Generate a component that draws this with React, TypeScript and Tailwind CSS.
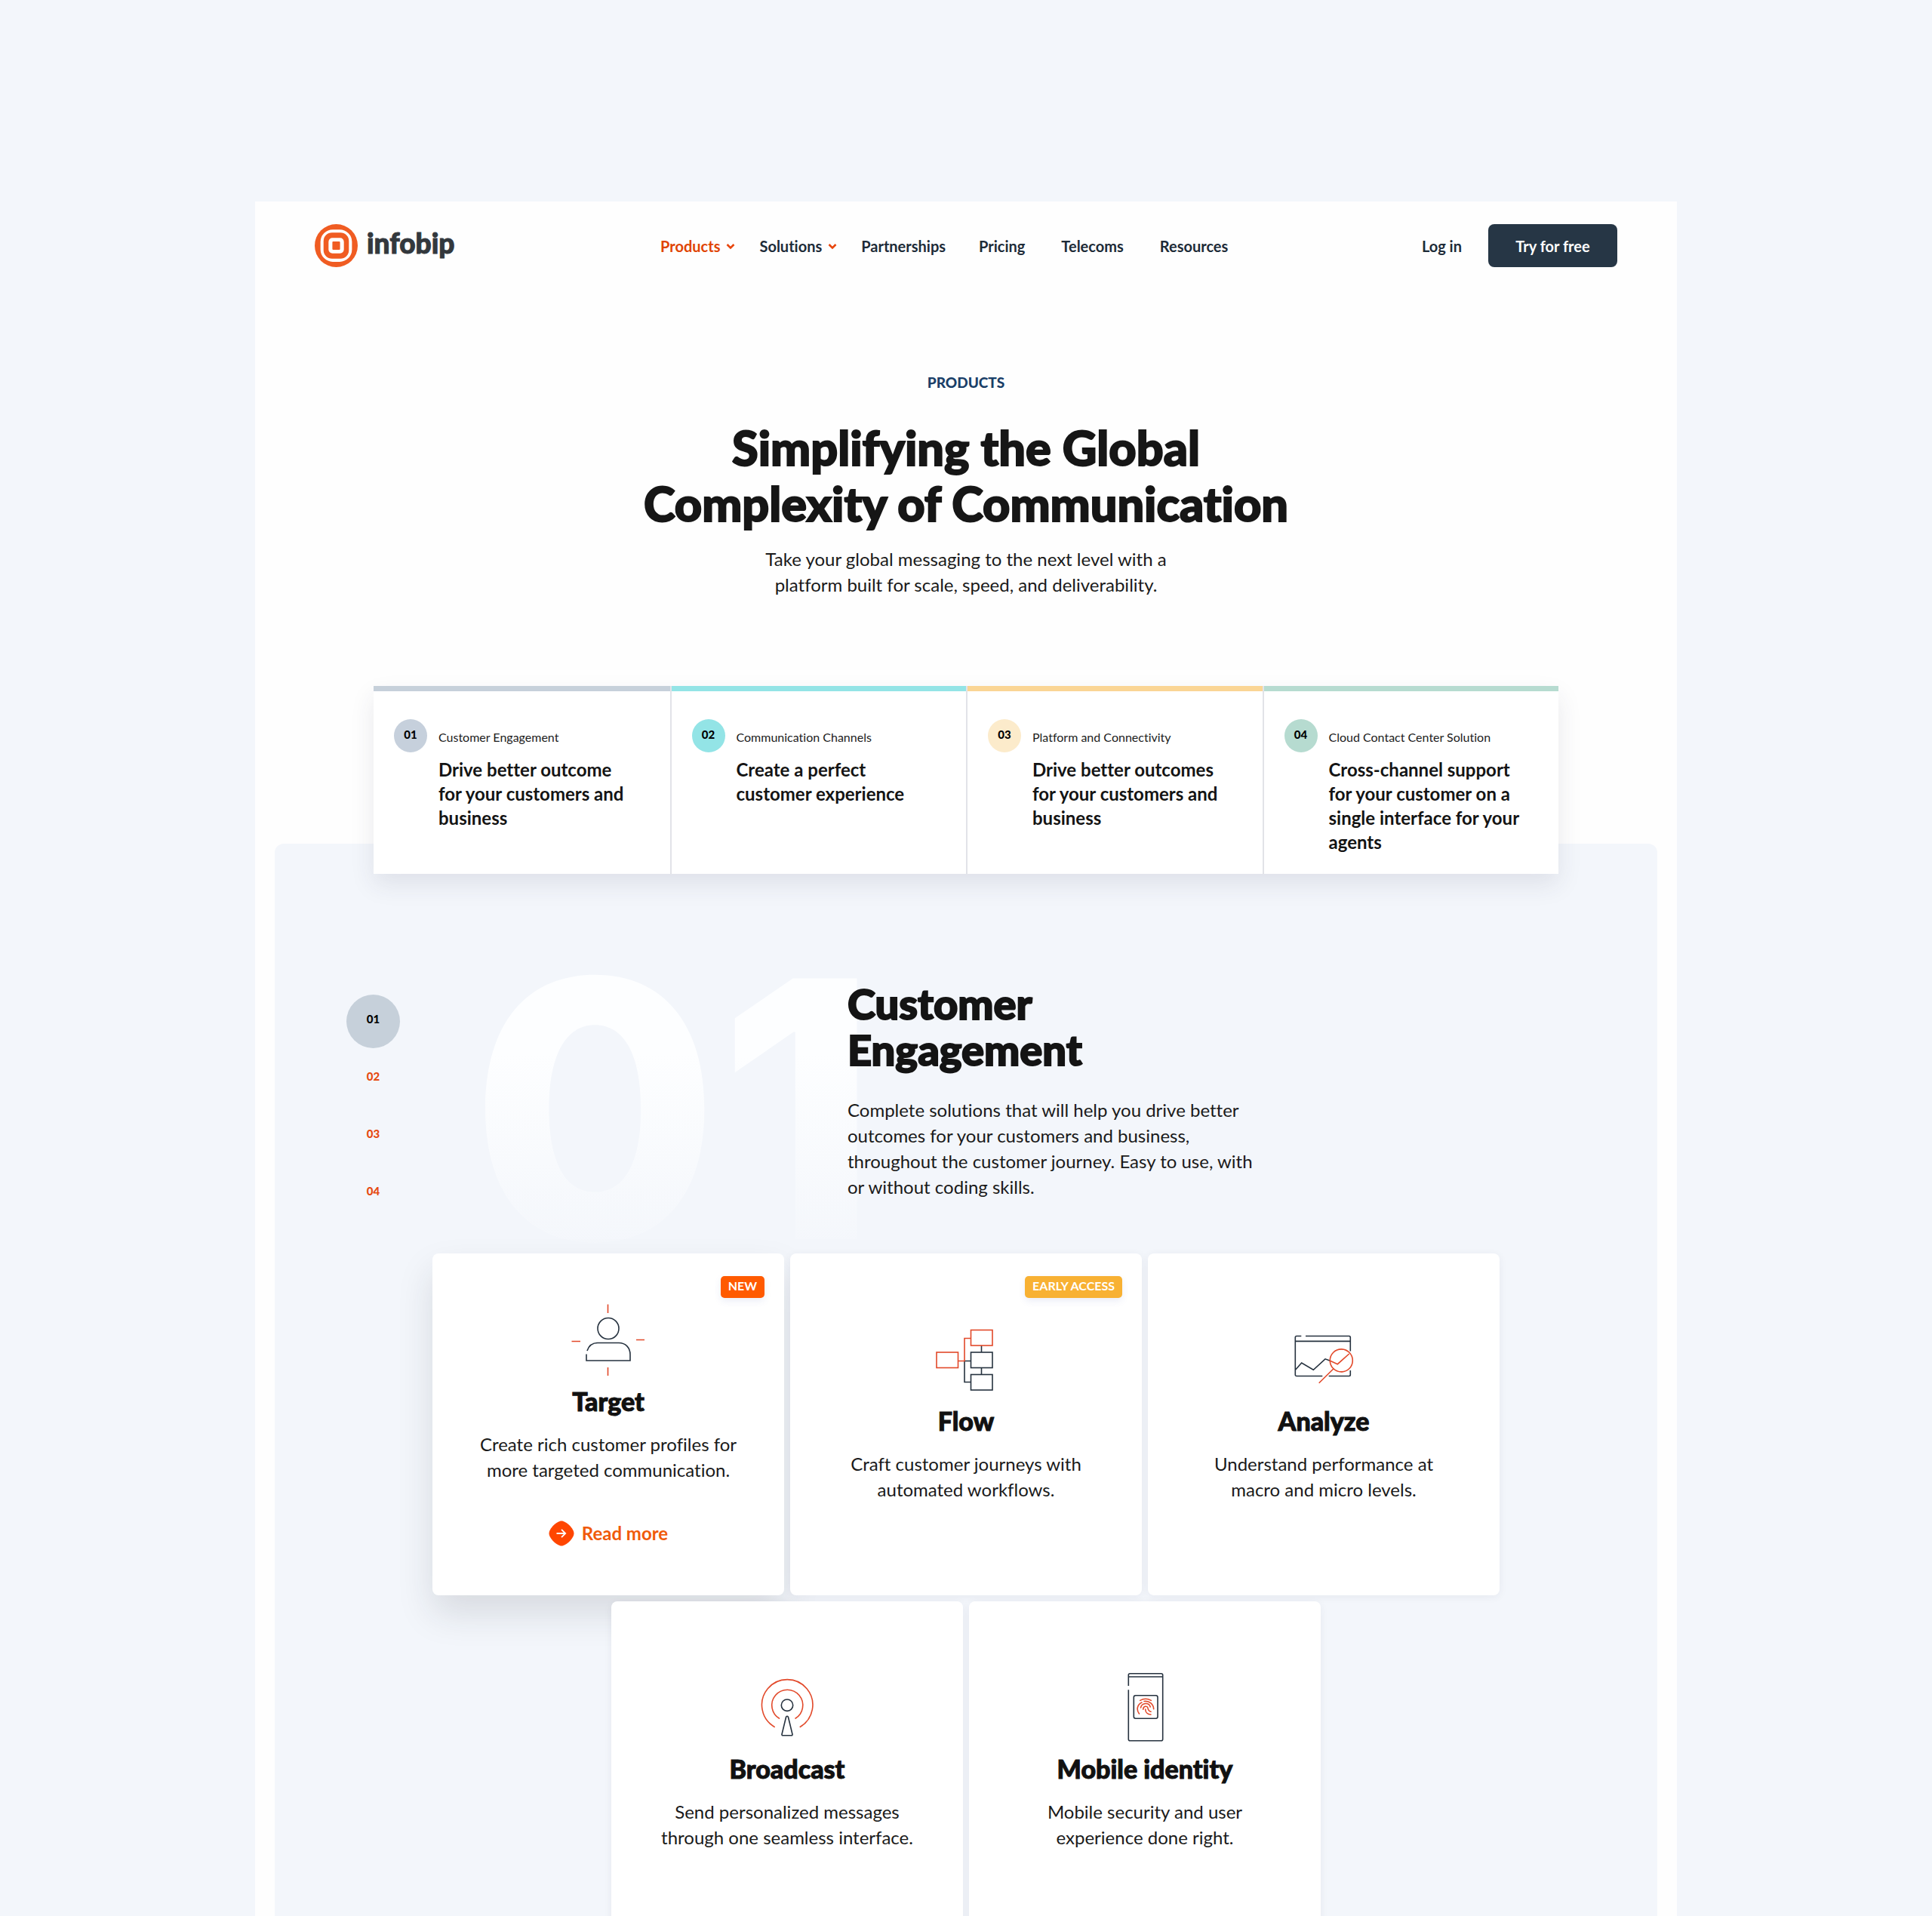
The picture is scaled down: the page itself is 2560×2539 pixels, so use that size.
import type { ReactNode } from "react";

const DARK = "#26323f";
const ORANGE = "#e2492a";

function Logo() {
  return (
    <a href="#home" className="flex items-center gap-3 pr-4 text-[#33383d]">
      <svg viewBox="0 0 56 56" className="size-[57px]" aria-hidden="true">
        <circle cx="28" cy="28" r="28" fill="#f05c22" />
        <rect x="7.5" y="7" width="41" height="42" rx="16" fill="#fff" />
        <rect x="11.5" y="11" width="33" height="34" rx="11" fill="#f05c22" />
        <rect x="18" y="18" width="20" height="20" rx="5" fill="#fff" />
        <rect x="23" y="22.500" width="10" height="11" rx="1" fill="#f05c22" />
      </svg>
      <span className="pb-2 text-[37px] leading-10 font-black [-webkit-text-stroke:1px_currentColor]">infobip</span>
    </a>
  );
}

function Chevron() {
  return (
    <svg viewBox="0 0 12 12" className="size-3" fill="none" stroke="#e8450c" strokeWidth="2.5" aria-hidden="true">
      <path d="M1.500 4l4.500 4.500 4.500-4.500" />
    </svg>
  );
}

const links = [
  { label: "Products", menu: true, style: "text-[#e04403]" },
  { label: "Solutions", menu: true, style: "ml-8 text-[#1d2b38]" },
  { label: "Partnerships", menu: false, style: "ml-8 text-[#1d2b38]" },
  { label: "Pricing", menu: false, style: "ml-11 text-[#1d2b38]" },
  { label: "Telecoms", menu: false, style: "ml-12 text-[#1d2b38]" },
  { label: "Resources", menu: false, style: "ml-12 text-[#1d2b38]" },
];

function Header() {
  return (
    <header className="flex items-center justify-between px-[79px] pt-[30px]">
      <Logo />
      <nav className="flex items-center text-[20px] leading-6 font-bold">
        {links.map((l) => (
          <a key={l.label} href={"#" + l.label.toLowerCase()} className={"flex items-center gap-2 " + l.style}>
            {l.label}
            {l.menu && <Chevron />}
          </a>
        ))}
      </nav>
      <div className="flex items-center gap-[35px] text-[20px] leading-6 font-bold text-[#1d2b38]">
        <a href="#login">Log in</a>
        <button className="h-[57px] w-[171px] rounded-lg bg-[#263645] text-white">Try for free</button>
      </div>
    </header>
  );
}

const topics = [
  { no: "01", bar: "bg-[#c6d0da]", dot: "bg-[#c6d0dc]", name: "Customer Engagement", text: "Drive better outcome\nfor your customers and\nbusiness" },
  { no: "02", bar: "bg-[#93e4e6]", dot: "bg-[#93e4e6]", name: "Communication Channels", text: "Create a perfect\ncustomer experience" },
  { no: "03", bar: "bg-[#fad594]", dot: "bg-[#fcebcb]", name: "Platform and Connectivity", text: "Drive better outcomes\nfor your customers and\nbusiness" },
  { no: "04", bar: "bg-[#b6dbd0]", dot: "bg-[#b6dbd0]", name: "Cloud Contact Center Solution", text: "Cross-channel support\nfor your customer on a\nsingle interface for your\nagents" },
];

function Topics() {
  return (
    <ul className="relative z-10 mx-auto grid w-full max-w-[1570px] grid-cols-4 bg-white shadow-[0_14px_30px_rgba(50,50,80,0.1)]">
      {topics.map((t, i) => (
        <li key={t.no} className={i ? "border-l-2 border-[#e2e3e8]" : ""}>
          <div className={"h-[7px] " + t.bar} />
          <a href={"#topic-" + t.no} className="flex gap-[15px] pt-[37px] pr-4 pb-[26px] pl-[27px]">
            <span className={"flex size-11 shrink-0 items-center justify-center rounded-full pb-1 text-[15px] font-black text-black " + t.dot}>{t.no}</span>
            <span className="block pt-3">
              <span className="block text-[16px] leading-6 text-[#1c1c1c]">{t.name}</span>
              <span className="mt-[15px] block text-[24px] leading-8 font-bold whitespace-pre text-[#141414]">{t.text}</span>
            </span>
          </a>
        </li>
      ))}
    </ul>
  );
}

function Icon({ children }: { children: ReactNode }) {
  return (
    <svg viewBox="0 0 100 100" className="size-[100px]" fill="none" stroke={DARK} strokeWidth="1.6" aria-hidden="true">
      {children}
    </svg>
  );
}

const targetIcon = (
  <Icon>
    <circle cx="50" cy="35.500" r="14" />
    <path d="M22 65C24 59 29 54.500 36 54.500H64C73 54.500 79 61 79 70V78H21V69.500" />
    <path stroke={ORANGE} d="M49.500 3.500V15M49.500 87V98M1.500 52.500H13M87 50.500H98" />
  </Icon>
);

const flowIcon = (
  <Icon>
    <path d="M70.500 32V41M70.500 61.500V70.500M48 52.500H56.500M48 53V80.500H56.500" />
    <rect x="56.500" y="41" width="28.500" height="20.500" />
    <rect x="56.500" y="70.500" width="28.500" height="20.500" />
    <g stroke={ORANGE}>
      <rect x="56.500" y="11.500" width="28.500" height="20.500" />
      <rect x="11" y="41" width="28.500" height="20.500" />
      <path d="M39.500 52.500H48V22.500H56.500" />
    </g>
  </Icon>
);

const analyzeIcon = (
  <Icon>
    <path d="M20.300 19.500H14a1.700 1.700 0 0 0-1.700 1.700V70.800a1.700 1.700 0 0 0 1.700 1.700H48.300M56.700 72.500H83.600a1.700 1.700 0 0 0 1.700-1.700V65M85.300 39.500V21.200a1.700 1.700 0 0 0-1.700-1.700H26M12.300 26.400H85.300" />
    <path d="M12.700 64L20.700 55L36.300 64.300L52 49.800L58.500 52.200" />
    <g stroke={ORANGE}>
      <path d="M58.500 52.200L68.300 56.700L83.700 43M63.300 62.500L43.700 81.800" />
      <circle cx="73.300" cy="51.900" r="15" />
    </g>
  </Icon>
);

const broadcastIcon = (
  <Icon>
    <circle cx="50" cy="47.700" r="7.700" />
    <path d="M48.600 63.200Q50 61.400 51.400 63.200L57 86.200Q57.200 87.800 55.600 87.800H44.400Q42.800 87.800 43 86.200Z" />
    <g stroke={ORANGE}>
      <path d="M33.700 76.700A33.700 33.700 0 1 1 66.700 76.700" />
      <path d="M40 65.500A20.500 20.500 0 1 1 60.500 65.500" />
    </g>
  </Icon>
);

const identityIcon = (
  <Icon>
    <path d="M28.300 22V7.700a2 2 0 0 1 2-2H71.700a2 2 0 0 1 2 2V92.700a2 2 0 0 1-2 2H30.300a2 2 0 0 1-2-2V27.300M28.300 10H73.700" />
    <rect x="35.300" y="34.700" width="31.700" height="30.600" rx="2.500" />
    <path
      stroke={ORANGE}
      strokeLinecap="round"
      d="M43.700 41.400Q51 37 58.300 41.400M46 44C40.500 46.500 38 53 42.500 59M49 42.500C56 41.500 61.500 46.500 61.700 52.700M44.500 51C46 43.800 56 43.800 57.200 50M47.700 53.300C47.700 48.500 53.500 48 54 51.500C54.300 54 55.500 55.500 58 56.300M50.700 53C50.700 57 53.500 59.800 58 60"
    />
  </Icon>
);

type Product = { name: string; text: string; icon: ReactNode; tag?: string; tagStyle?: string; more?: boolean };

const products: Product[] = [
  { name: "Target", text: "Create rich customer profiles for\nmore targeted communication.", icon: targetIcon, tag: "NEW", tagStyle: "bg-[#ff5a00]", more: true },
  { name: "Flow", text: "Craft customer journeys with\nautomated workflows.", icon: flowIcon, tag: "EARLY ACCESS", tagStyle: "bg-[#f8b133]" },
  { name: "Analyze", text: "Understand performance at\nmacro and micro levels.", icon: analyzeIcon },
  { name: "Broadcast", text: "Send personalized messages\nthrough one seamless interface.", icon: broadcastIcon },
  { name: "Mobile identity", text: "Mobile security and user\nexperience done right.", icon: identityIcon },
];

function ProductCard({ p }: { p: Product }) {
  return (
    <article
      className={
        "relative flex min-h-[453px] w-[466px] flex-col items-center rounded-lg bg-white text-center " +
        (p.more ? "pt-16 shadow-[0_24px_48px_rgba(30,35,50,0.13)]" : "pt-[90px] shadow-[0_2px_12px_rgba(30,35,70,0.06)]")
      }
    >
      {p.tag && (
        <span className={"absolute top-[30px] right-[26px] rounded-[5px] px-2.5 pt-0.5 pb-[5px] text-[16px] leading-[22px] font-bold text-white shadow-[0_4px_10px_rgba(60,80,180,0.1)] " + p.tagStyle}>
          {p.tag}
        </span>
      )}
      {p.icon}
      <h3 className="mt-3 text-[34px] leading-10 font-black text-[#111] [-webkit-text-stroke:1px_currentColor]">{p.name}</h3>
      <p className="mt-5 text-[24px] leading-[34px] whitespace-pre-line text-[#1a1a1a]">{p.text}</p>
      {p.more && (
        <a href="#target" className="mt-[50px] flex items-center gap-2.5 text-[24px] leading-[34px] font-bold text-[#f05a0a]">
          <svg viewBox="0 0 34 34" className="size-[34px]" fill="none" aria-hidden="true">
            <path fill="#ff4600" d="M17 0.500C23 0.500 33.500 10.500 33.500 17S23 33.500 17 33.500S0.500 23.500 0.500 17S11 0.500 17 0.500Z" />
            <path stroke="#fff" strokeWidth="1.800" d="M10.500 17H22M17 11.800L22.200 17L17 22.200" />
          </svg>
          Read more
        </a>
      )}
    </article>
  );
}

const steps = ["01", "02", "03", "04"];

function Engagement() {
  return (
    <section className="mx-[26px] -mt-10 flex-1 rounded-t-xl bg-[#f3f6fb] pt-[181px]">
      <div className="flex pl-[95px]">
        <ol className="mt-[19px] mb-px flex w-[71px] shrink-0 flex-col gap-[5px] text-[15px] font-black">
          {steps.map((s, i) => (
            <li key={s}>
              <a
                href={"#step-" + s}
                className={"flex h-[71px] items-center justify-center rounded-full pb-1.5 " + (i ? "text-[#e64a12]" : "bg-[#c6d0da] text-black")}
              >
                {s}
              </a>
            </li>
          ))}
        </ol>
        <div className="relative w-[593px] shrink-0">
          <span
            aria-hidden="true"
            className="absolute -top-[67px] left-[94px] w-max bg-linear-to-b from-[#fdfeff] from-35% to-[#f3f6fb] to-95% bg-clip-text font-[Inter,sans-serif] text-[475px] leading-none font-extrabold text-transparent"
          >
            01
          </span>
        </div>
        <div className="relative">
          <h2 className="text-[56px] leading-[61px] font-black text-[#141414] [-webkit-text-stroke:2px_currentColor]">
            Customer
            <br />
            Engagement
          </h2>
          <p className="mt-[33px] text-[24px] leading-[34px] text-[#1a1a1a]">
            Complete solutions that will help you drive better
            <br />
            outcomes for your customers and business,
            <br />
            throughout the customer journey. Easy to use, with
            <br />
            or without coding skills.
          </p>
        </div>
      </div>
      <div className="relative mx-auto mt-[43px] flex max-w-[1414px] flex-wrap justify-center gap-2">
        {products.map((p) => (
          <ProductCard key={p.name} p={p} />
        ))}
      </div>
    </section>
  );
}

export default function App() {
  return (
    <div className="h-screen overflow-hidden bg-[#f3f6fb] pt-[267px] font-[Lato,sans-serif] [font-variant-ligatures:none]">
      <div className="mx-auto flex max-w-[1884px] flex-col bg-[#fefefe]">
        <Header />
        <section className="pt-[141px] pb-[117px] text-center">
          <p className="text-[19px] leading-6 font-black text-[#1a3f68]">PRODUCTS</p>
          <h1 className="mt-[37px] text-[63px] leading-[74px] font-black text-[#161616] [-webkit-text-stroke:2px_currentColor]">
            Simplifying the Global
            <br />
            Complexity of Communication
          </h1>
          <p className="mt-5 text-[24px] leading-[34px] text-[#1a1a1a]">
            Take your global messaging to the next level with a
            <br />
            platform built for scale, speed, and deliverability.
          </p>
        </section>
        <Topics />
        <Engagement />
      </div>
    </div>
  );
}
